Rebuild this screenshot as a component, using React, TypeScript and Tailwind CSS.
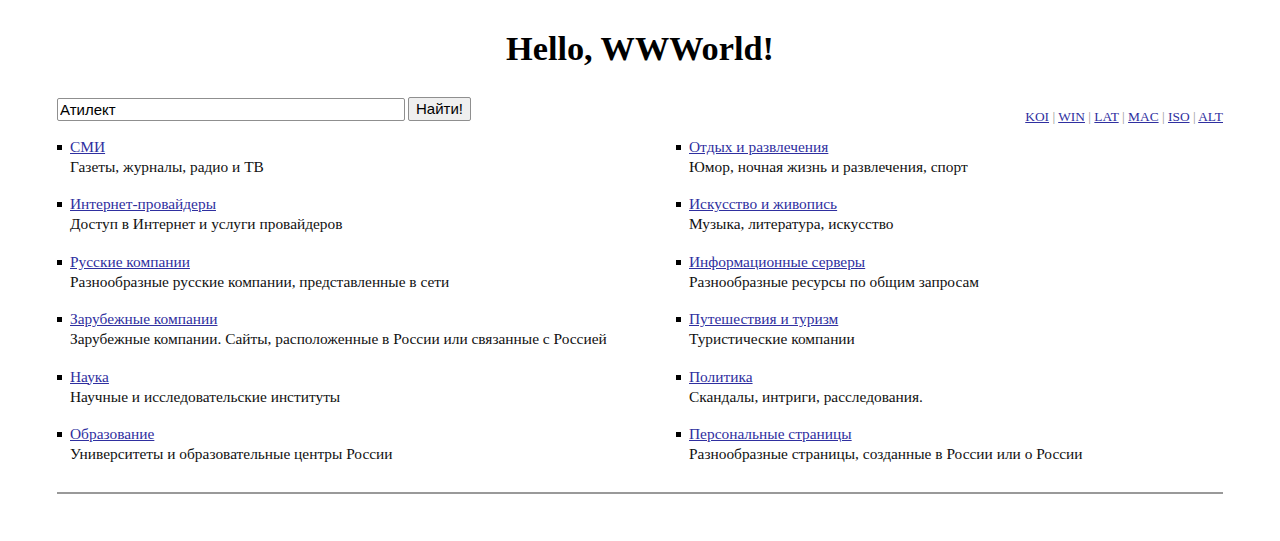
import React from "react";

const left = [
  { title: "СМИ", desc: "Газеты, журналы, радио и ТВ" },
  { title: "Интернет-провайдеры", desc: "Доступ в Интернет и услуги провайдеров" },
  { title: "Русские компании", desc: "Разнообразные русские компании, представленные в сети" },
  { title: "Зарубежные компании", desc: "Зарубежные компании. Сайты, расположенные в России или связанные с Россией" },
  { title: "Наука", desc: "Научные и исследовательские институты" },
  { title: "Образование", desc: "Университеты и образовательные центры России" },
];

const right = [
  { title: "Отдых и развлечения", desc: "Юмор, ночная жизнь и развлечения, спорт" },
  { title: "Искусство и живопись", desc: "Музыка, литература, искусство" },
  { title: "Информационные серверы", desc: "Разнообразные ресурсы по общим запросам" },
  { title: "Путешествия и туризм", desc: "Туристические компании" },
  { title: "Политика", desc: "Скандалы, интриги, расследования." },
  { title: "Персональные страницы", desc: "Разнообразные страницы, созданные в России или о России" },
];

const langs = ["KOI", "WIN", "LAT", "MAC", "ISO", "ALT"];

const Column = ({ items }: { items: { title: string; desc: string }[] }) => (
  <ul className="flex flex-col gap-[17.4px]">
    {items.map((it) => (
      <li key={it.title} className="flex">
        <span className="mt-[8px] mr-[8px] h-[5px] w-[5px] shrink-0 bg-black"></span>
        <div className="leading-[20px]">
          <a href="#" className="text-[#2f2fa0] underline">
            {it.title}
          </a>
          <div className="text-[#111]">{it.desc}</div>
        </div>
      </li>
    ))}
  </ul>
);

export default function App() {
  return (
    <div className="min-h-[541px] bg-white px-[57px] text-[15.4px] font-['Liberation_Serif',serif] text-black">
      <h1 className="pt-[30px] text-center text-[34.3px] font-bold leading-[37px]">Hello, WWWorld!</h1>

      <div className="mt-[30px] flex items-end justify-between">
        <form className="flex items-center gap-[3px] font-['Liberation_Sans',sans-serif]" onSubmit={(e) => e.preventDefault()}>
          <input
            type="text"
            defaultValue="Атилект"
            className="h-[23px] w-[348px] rounded-[2px] border border-[#8f8f8f] px-[2px] text-[15px] leading-[20px] outline-none"
          />
          <button
            type="submit"
            className="h-[24px] w-[63px] rounded-[2px] border border-[#8f8f8f] bg-[#efefef] text-[15px] leading-[20px]"
          >
            Найти!
          </button>
        </form>
        <div className="mb-[-6px] text-[13.4px] leading-[20px]">
          {langs.map((l, i) => (
            <React.Fragment key={l}>
              {i > 0 && <span className="text-[#999]"> | </span>}
              <a href="#" className="text-[#2f2fa0] underline">
                {l}
              </a>
            </React.Fragment>
          ))}
        </div>
      </div>

      <div className="mt-[16px] grid grid-cols-[619px_1fr]">
        <Column items={left} />
        <Column items={right} />
      </div>

      <hr className="mt-[28px] border-t-2 border-[#999]" />
    </div>
  );
}
